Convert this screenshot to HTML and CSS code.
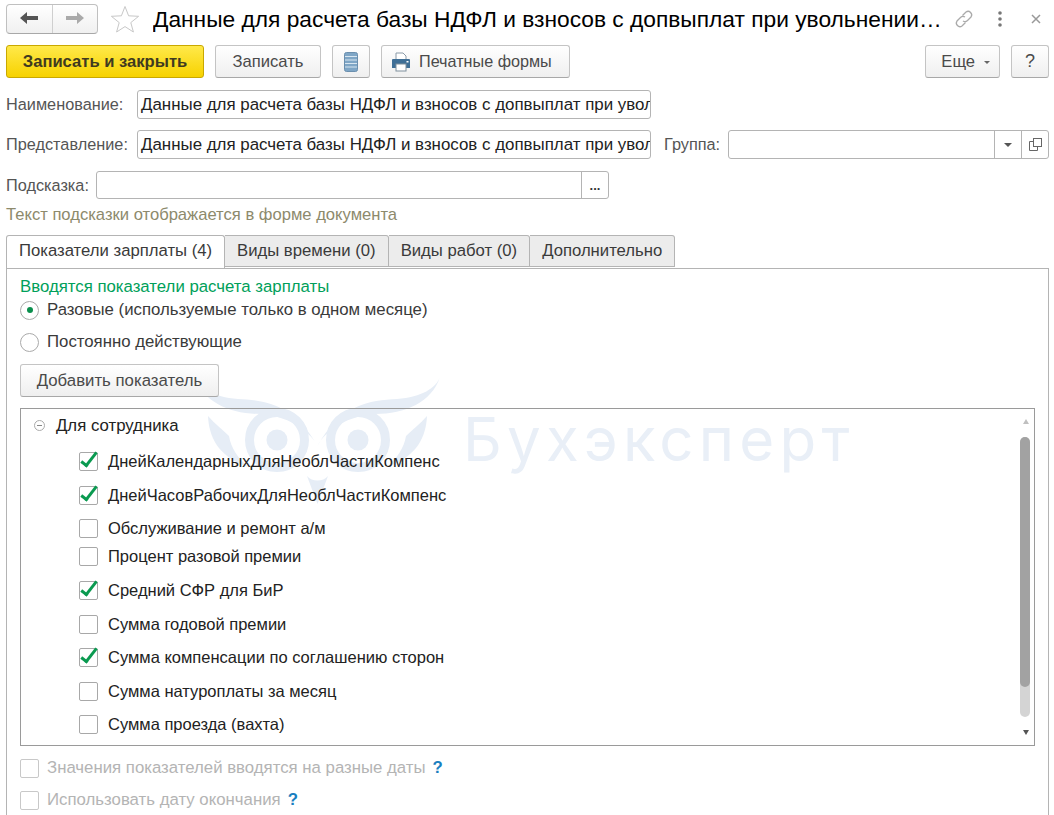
FILE: index.html
```html
<!DOCTYPE html>
<html lang="ru">

<head>
    <meta charset="UTF-8">
    <title>Данные для расчета базы НДФЛ</title>
    <link rel="stylesheet" href="styles.css">
</head>

<body>
    <div class="watermark">
        <svg class="owl" width="260" height="140" viewBox="0 0 260 140">
            <g fill="#e6edf6">
                <circle cx="87" cy="70" r="10.5"/>
                <circle cx="168" cy="70" r="10.5"/>
                <circle cx="87" cy="70" r="27.5" fill="none" stroke="#e6edf6" stroke-width="9"/>
                <circle cx="168" cy="70" r="27.5" fill="none" stroke="#e6edf6" stroke-width="9"/>
                <path d="M250 7 C246 18 232 27 207 29 C180 30 150 35 127.5 76 C135 60 160 45 185 44 C215 44 242 32 250 7Z"/>
                <path d="M5 7 C9 18 23 27 48 29 C75 30 105 35 127.5 76 C120 60 95 45 70 44 C40 44 13 32 5 7Z"/>
                <path d="M237 46 C236 66 228 86 197 97 C207 88 214 78 216 66 C222 60 230 54 237 46Z"/>
                <path d="M18 46 C19 66 27 86 58 97 C48 88 41 78 39 66 C33 60 25 54 18 46Z"/>
                <path d="M117 106 C122 112 133 112 138 106 L127.5 134Z"/>
            </g>
        </svg>
        <span class="watermark-text">Бухэксперт</span>
    </div>

    <div class="titlebar">
        <div class="nav-group">
            <button class="nav-btn">
                <svg width="18" height="12" viewBox="0 0 18 12"><path d="M0 6 L7 0 V4 H18 V8 H7 V12Z" fill="#555"/></svg>
            </button>
            <button class="nav-btn">
                <svg width="18" height="12" viewBox="0 0 18 12"><path d="M18 6 L11 0 V4 H0 V8 H11 V12Z" fill="#aaa"/></svg>
            </button>
        </div>
        <svg class="star" width="30" height="28" viewBox="0 0 30 28">
            <path d="M15 1.5 L18.6 10.8 L28.6 11.3 L20.8 17.6 L23.4 27 L15 21.6 L6.6 27 L9.2 17.6 L1.4 11.3 L11.4 10.8Z" fill="#fff" stroke="#c8c8c8"/>
        </svg>
        <h1 class="title">Данные для расчета базы НДФЛ и взносов с допвыплат при увольнении…</h1>
        <svg class="link-icon" width="20" height="20" viewBox="0 0 20 20" fill="none" stroke="#aaa" stroke-width="1.3">
            <path d="M8.5 6.5 L12 3 A3.6 3.6 0 0 1 17 8 L13.5 11.5 A3.6 3.6 0 0 1 9 12"/>
            <path d="M11.5 13.5 L8 17 A3.6 3.6 0 0 1 3 12 L6.5 8.5 A3.6 3.6 0 0 1 11 8"/>
        </svg>
        <svg class="dots" width="4" height="16" viewBox="0 0 4 16" fill="#777">
            <circle cx="2" cy="2" r="1.8"/><circle cx="2" cy="8" r="1.8"/><circle cx="2" cy="14" r="1.8"/>
        </svg>
        <svg class="close" width="10" height="10" viewBox="0 0 10 10" stroke="#999" stroke-width="1.5">
            <path d="M1 1 L9 9 M9 1 L1 9"/>
        </svg>
    </div>

    <div class="commandbar">
        <button class="btn btn-primary">Записать и закрыть</button>
        <button class="btn btn-save">Записать</button>
        <button class="btn btn-icon">
            <svg width="14" height="20" viewBox="0 0 14 20">
                <rect x="0.5" y="0.5" width="13" height="19" rx="2" fill="#7fa6c6" stroke="#6b8fae"/>
                <path d="M1 4.5 H13 M1 8 H13 M1 11.5 H13 M1 15 H13" stroke="#d8e6f0" stroke-width="1.2"/>
            </svg>
        </button>
        <button class="btn btn-print">
            <svg width="20" height="20" viewBox="0 0 20 20">
                <path d="M5 1 H12 L15 4 V9 H5Z" fill="#fff" stroke="#8a9aa8"/>
                <path d="M1 8 Q1 7 2 7 H18 Q19 7 19 8 V16 H1Z" fill="#3f6f96"/>
                <rect x="5" y="12" width="10" height="7" fill="#fff" stroke="#7f8f9c"/>
                <rect x="15.5" y="9" width="2" height="1.5" fill="#fff"/>
            </svg>
            Печатные формы
        </button>
        <div class="spacer"></div>
        <button class="btn btn-more">Еще <span class="caret"></span></button>
        <button class="btn btn-help">?</button>
    </div>

    <div class="form-row row-name">
        <label class="field-label label-name">Наименование:</label>
        <div class="input input-main">Данные для расчета базы НДФЛ и взносов с допвыплат при увол</div>
    </div>

    <div class="form-row row-view">
        <label class="field-label label-view">Представление:</label>
        <div class="input input-main">Данные для расчета базы НДФЛ и взносов с допвыплат при увол</div>
        <label class="field-label label-group">Группа:</label>
        <div class="input input-group">
            <span class="input-value"></span>
            <span class="input-btn"><span class="caret caret-dark"></span></span>
            <span class="input-btn">
                <svg width="13" height="13" viewBox="0 0 13 13" fill="none" stroke="#666">
                    <rect x="4.5" y="0.5" width="8" height="8"/>
                    <path d="M4.5 3.5 H0.5 V12.5 H8.5 V8.5"/>
                </svg>
            </span>
        </div>
    </div>

    <div class="form-row row-hint">
        <label class="field-label label-hint">Подсказка:</label>
        <div class="input input-hint">
            <span class="input-value"></span>
            <span class="input-btn input-btn-dots">...</span>
        </div>
    </div>
    <p class="hint-text">Текст подсказки отображается в форме документа</p>

    <div class="tabs">
        <div class="tab tab-active">Показатели зарплаты (4)</div>
        <div class="tab">Виды времени (0)</div>
        <div class="tab">Виды работ (0)</div>
        <div class="tab">Дополнительно</div>
    </div>

    <div class="panel">
        <div class="panel-title">Вводятся показатели расчета зарплаты</div>
        <div class="radio-row radio-first"><span class="radio radio-on"></span>Разовые (используемые только в одном месяце)</div>
        <div class="radio-row"><span class="radio"></span>Постоянно действующие</div>
        <button class="btn btn-add">Добавить показатель</button>

        <div class="tree">
            <div class="tree-list">
                <div class="tree-group"><span class="collapse"></span>Для сотрудника</div>
                <div class="tree-row"><span class="check check-on"></span>ДнейКалендарныхДляНеоблЧастиКомпенс</div>
                <div class="tree-row"><span class="check check-on"></span>ДнейЧасовРабочихДляНеоблЧастиКомпенс</div>
                <div class="tree-row"><span class="check"></span>Обслуживание и ремонт а/м</div>
                <div class="tree-row tree-row-short"><span class="check"></span>Процент разовой премии</div>
                <div class="tree-row"><span class="check check-on"></span>Средний СФР для БиР</div>
                <div class="tree-row"><span class="check"></span>Сумма годовой премии</div>
                <div class="tree-row"><span class="check check-on"></span>Сумма компенсации по соглашению сторон</div>
                <div class="tree-row"><span class="check"></span>Сумма натуроплаты за месяц</div>
                <div class="tree-row"><span class="check"></span>Сумма проезда (вахта)</div>
            </div>
            <div class="scroll">
                <span class="scroll-up"></span>
                <div class="scroll-track"><div class="scroll-thumb"></div></div>
                <span class="scroll-down"></span>
            </div>
        </div>

        <div class="option-row"><span class="check check-off"></span>Значения показателей вводятся на разные даты <span class="help-mark">?</span></div>
        <div class="option-row"><span class="check check-off"></span>Использовать дату окончания <span class="help-mark">?</span></div>
    </div>
</body>

</html>
```

FILE: styles.css
```css
html,
body {
    height: 815px;
    overflow: hidden;
}

body {
    margin: 0;
    background-color: #fff;
    font-family: "Liberation Sans", Arial, sans-serif;
    font-size: 16.6px;
    color: #3a3a3a;
}

button {
    font-family: inherit;
    font-size: 16.6px;
}

/* watermark behind the form */
.watermark {
    position: absolute;
    left: 190px;
    top: 370px;
    z-index: -1;
    width: 680px;
    height: 140px;
}

.owl {
    position: absolute;
    left: 0;
    top: 0;
}

.watermark-text {
    position: absolute;
    left: 273px;
    top: 33px;
    font-family: Inter, sans-serif;
    font-size: 60px;
    letter-spacing: 5.2px;
    line-height: 72px;
    color: #e9eff7;
    white-space: nowrap;
}

/* title */
.titlebar {
    display: flex;
    align-items: center;
    height: 30px;
    padding: 4px 0 0 6px;
}

.nav-group {
    display: flex;
    width: 92px;
    height: 30px;
    box-sizing: border-box;
    border: 1px solid #c0c0c0;
    border-bottom-color: #a8a8a8;
    border-radius: 4px;
    background: linear-gradient(#fff, #f0f0f0);
}

.nav-btn {
    flex: 1;
    padding: 0;
    border: none;
    background: none;
}

.nav-btn + .nav-btn {
    border-left: 1px solid #cfcfcf;
}

.star {
    margin-left: 12px;
}

.title {
    width: 789px;
    margin: 0 0 0 13px;
    font-size: 22.75px;
    font-weight: normal;
    color: #000;
    white-space: nowrap;
    overflow: hidden;
}

.link-icon {
    margin-left: 12px;
}

.dots {
    margin-left: 24px;
}

.close {
    margin-left: 29px;
}

/* command bar */
.commandbar {
    display: flex;
    gap: 11px;
    padding: 11px 5px 0 6px;
}

.btn {
    height: 33px;
    box-sizing: border-box;
    padding: 0;
    border: 1px solid #c4c4c4;
    border-bottom-color: #a8a8a8;
    border-radius: 3px;
    background: linear-gradient(#fff, #efefef);
    color: #4a4a4a;
}

.btn-primary {
    width: 198px;
    border-color: #c9a800;
    background: linear-gradient(#ffe94a, #f7d200);
    font-weight: bold;
    color: #3f3a20;
}

.btn-save {
    width: 106px;
}

.btn-icon {
    width: 38px;
}

.btn-icon svg {
    display: block;
    margin: 0 auto;
}

.btn-print {
    display: flex;
    align-items: center;
    gap: 8px;
    width: 189px;
    padding-left: 9px;
    font-size: 16.2px;
}

.spacer {
    flex: 1;
}

.btn-more {
    width: 75px;
    padding-left: 6px;
}

.btn-help {
    width: 38px;
    font-size: 18px;
}

.caret {
    display: inline-block;
    width: 0;
    height: 0;
    margin-left: 4px;
    border: 3px solid transparent;
    border-top: 3px solid #666;
    border-bottom: 0;
    vertical-align: middle;
}

.caret-dark {
    margin: 0;
    border-width: 4px 4px 0;
    border-top-color: #555;
}

/* form rows */
.form-row {
    display: flex;
    align-items: center;
    padding-left: 6px;
}

.row-name {
    margin-top: 12px;
}

.row-view {
    margin-top: 11px;
}

.row-hint {
    margin-top: 12px;
}

.field-label {
    flex: none;
    font-size: 16.3px;
    color: #555;
}

.label-name,
.label-view {
    width: 131px;
}

.label-group {
    width: 64px;
    margin-left: 13px;
}

.label-hint {
    width: 90px;
}

.input {
    display: flex;
    box-sizing: border-box;
    height: 29px;
    border: 1px solid #b4b4b4;
    border-radius: 3px;
    background: #fff;
    line-height: 27px;
    color: #222;
    overflow: hidden;
    white-space: nowrap;
}

.input-main {
    width: 514px;
    padding-left: 3px;
    font-size: 16.9px;
}

.input-group {
    width: 321px;
}

.input-hint {
    width: 513px;
    height: 28px;
}

.input-value {
    flex: 1;
}

.input-btn {
    display: flex;
    align-items: center;
    justify-content: center;
    width: 26px;
    border-left: 1px solid #b4b4b4;
}

.input-btn-dots {
    color: #333;
    font-weight: bold;
    font-size: 13px;
}

.hint-text {
    margin: 7px 0 0 6px;
    line-height: 18px;
    color: #8d8a6c;
}

/* tabs */
.tabs {
    display: flex;
    margin: 11px 0 0 6px;
    font-size: 16.7px;
}

.tab {
    height: 32px;
    box-sizing: border-box;
    padding: 0 12px;
    border: 1px solid #b4b4b4;
    border-left: none;
    border-radius: 0 3px 0 0;
    background: #ececec;
    line-height: 30px;
    white-space: nowrap;
}

.tab-active {
    position: relative;
    z-index: 1;
    height: 33px;
    border-left: 1px solid #b4b4b4;
    border-bottom: none;
    border-radius: 3px 3px 0 0;
    background: #fff;
}

.panel {
    box-sizing: border-box;
    height: 560px;
    margin: 0 5px 0 6px;
    padding: 9px 13px 0;
    border: 1px solid #b4b4b4;
    font-size: 16.8px;
}

.panel-title {
    line-height: 18px;
    color: #00a05a;
}

.radio-row {
    display: flex;
    align-items: center;
    gap: 8px;
    height: 32px;
}

.radio-first {
    margin-top: -2px;
}

.radio {
    position: relative;
    flex: none;
    box-sizing: border-box;
    width: 19px;
    height: 19px;
    border: 1px solid #aaa;
    border-radius: 50%;
    background: #fff;
}

.radio-on::after {
    content: "";
    position: absolute;
    left: 5.5px;
    top: 5.5px;
    width: 6px;
    height: 6px;
    border-radius: 50%;
    background: #0a8f4d;
}

.btn-add {
    display: block;
    width: 199px;
    margin-top: 6px;
    font-size: 16.8px;
}

/* tree */
.tree {
    display: flex;
    box-sizing: border-box;
    height: 338px;
    margin-top: 11px;
    border: 1px solid #9a9a9a;
}

.tree-list {
    flex: 1;
    color: #222;
}

.tree-group {
    display: flex;
    align-items: center;
    height: 33px;
    margin-bottom: 3px;
    padding-left: 13px;
}

.collapse {
    position: relative;
    box-sizing: border-box;
    width: 11px;
    height: 11px;
    margin-right: 11px;
    border: 1px solid #aaa;
    border-radius: 50%;
}

.collapse::after {
    content: "";
    position: absolute;
    left: 2px;
    top: 4px;
    width: 5px;
    height: 1px;
    background: #888;
}

.tree-row {
    display: flex;
    align-items: center;
    gap: 10px;
    height: 33.6px;
    padding-left: 58px;
    font-size: 16.5px;
}

.tree-row-short {
    margin-top: -5.6px;
}

.check {
    position: relative;
    flex: none;
    box-sizing: border-box;
    width: 19px;
    height: 19px;
    border: 1px solid #a8a8a8;
    border-radius: 2px;
    background: #fff;
}

.check-on::after {
    content: "";
    position: absolute;
    left: 5px;
    top: -4px;
    width: 5px;
    height: 15px;
    border: solid #0a9a50;
    border-width: 0 3px 3px 0;
    transform: rotate(38deg);
}

.check-off {
    border-color: #c8c8c8;
}

.scroll {
    position: relative;
    flex: none;
    width: 14px;
}

.scroll-up,
.scroll-down {
    position: absolute;
    left: 3px;
    width: 0;
    height: 0;
    border: 3px solid transparent;
    border-top: none;
    border-bottom: 5px solid #c0c0c0;
}

.scroll-up {
    top: 10px;
}

.scroll-down {
    bottom: 10px;
    border-bottom: none;
    border-top: 5px solid #555;
}

.scroll-track {
    position: absolute;
    left: 0;
    top: 28px;
    width: 10px;
    height: 280px;
    border-radius: 5px;
    background: #d4d4d4;
}

.scroll-thumb {
    height: 250px;
    border-radius: 5px;
    background: #a2a2a2;
}

/* options below the tree */
.option-row {
    display: flex;
    align-items: center;
    gap: 8px;
    height: 32px;
    color: #b4b4b4;
}

.tree + .option-row {
    margin-top: 6px;
}

.help-mark {
    margin-left: -1px;
    font-weight: bold;
    color: #1a7fc0;
}
```
